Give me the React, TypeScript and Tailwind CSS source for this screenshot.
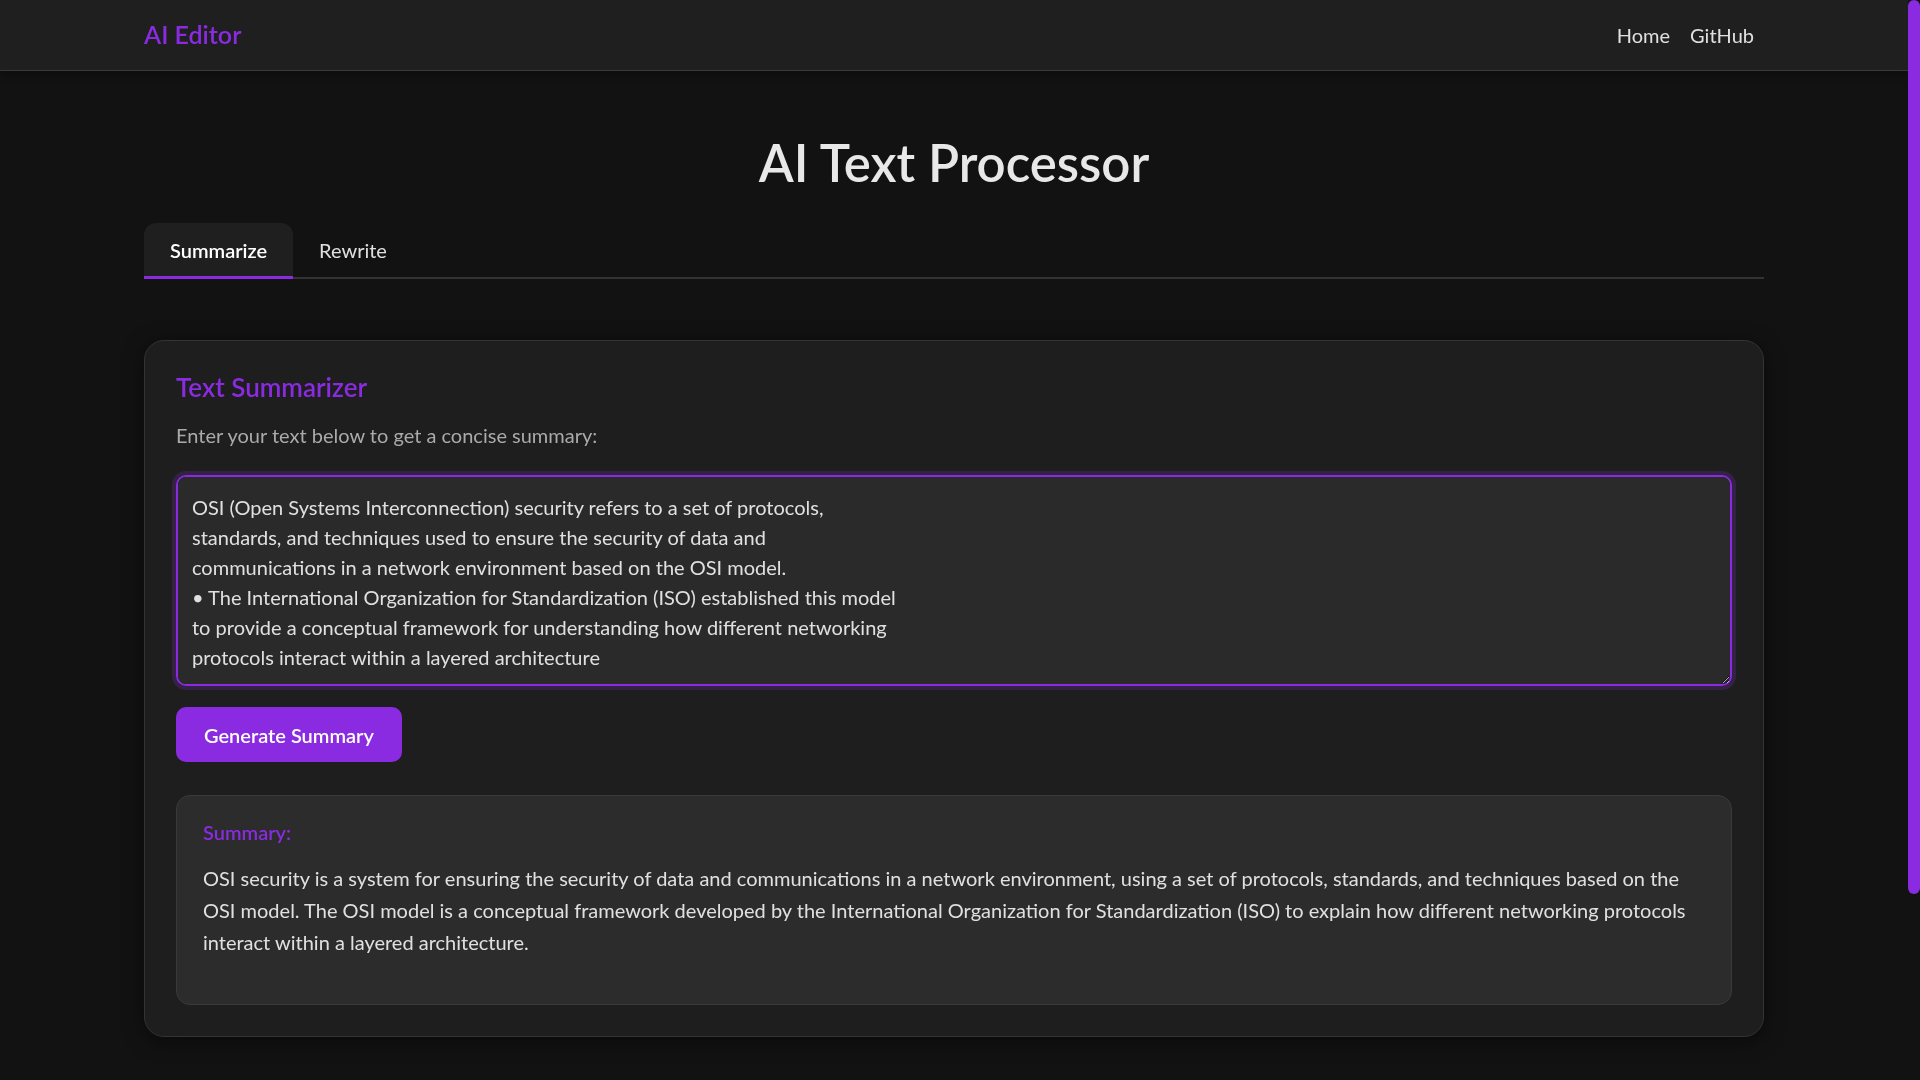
import { useState } from "react"

const initialText = `OSI (Open Systems Interconnection) security refers to a set of protocols,
standards, and techniques used to ensure the security of data and
communications in a network environment based on the OSI model.
• The International Organization for Standardization (ISO) established this model
to provide a conceptual framework for understanding how different networking
protocols interact within a layered architecture`

const summary =
  "OSI security is a system for ensuring the security of data and communications in a network environment, using a set of protocols, standards, and techniques based on the OSI model. The OSI model is a conceptual framework developed by the International Organization for Standardization (ISO) to explain how different networking protocols interact within a layered architecture."

const App = () => {
  const [tab, setTab] = useState("summarize")
  const [text, setText] = useState(initialText)

  return (
    <div className="h-screen flex bg-[#121212] text-[#e0e0e0] font-[Lato,sans-serif] overflow-hidden">
      <div className="flex-1 min-w-0">
        <header className="h-[71px] bg-[#1f1f1f] border-b border-[#3a3a3a] shadow-[0_2px_10px_rgba(0,0,0,0.4)]">
          <div className="w-[1620px] mx-auto h-full flex justify-between items-center">
            <div className="text-[25px] font-semibold text-[#8a2be2]">AI Editor</div>
            <nav className="flex items-center text-[20px] pr-[10px]">
              <a className="px-[10px] text-[#e0e0e0]" href="#">Home</a>
              <a className="pl-[10px] text-[#e0e0e0]" href="#">GitHub</a>
            </nav>
          </div>
        </header>

        <main className="w-[1620px] mx-auto pt-[56px]">
          <h1 className="text-center text-[51px] leading-[72px] font-semibold text-[#e8e8e8]">AI Text Processor</h1>

          <div className="mt-[24px] flex border-b-2 border-[#333]">
            <button
              onClick={() => setTab("summarize")}
              className={`h-[56px] px-[26px] text-[20px] rounded-t-[12px] border-b-[3px] -mb-[2px] ${tab === "summarize" ? "bg-[#1f1f1f] border-[#8a2be2] text-white font-semibold" : "border-transparent text-[#e0e0e0]"}`}
            >
              Summarize
            </button>
            <button
              onClick={() => setTab("rewrite")}
              className={`h-[56px] px-[26px] text-[20px] rounded-t-[12px] border-b-[3px] -mb-[2px] ${tab === "rewrite" ? "bg-[#1f1f1f] border-[#8a2be2] text-white font-semibold" : "border-transparent text-[#e0e0e0]"}`}
            >
              Rewrite
            </button>
          </div>

          <section className="mt-[61px] bg-[#1e1e1e] border border-[#333] rounded-[20px] p-[31px] pb-[31px] shadow-[0_4px_20px_rgba(0,0,0,0.5)]">
            <h2 className="text-[26px] leading-[30px] font-semibold text-[#8a2be2]">Text Summarizer</h2>
            <p className="mt-[18px] text-[20px] leading-[30px] text-[#aaaaaa]">Enter your text below to get a concise summary:</p>

            <textarea
              value={text}
              onChange={(e) => setText(e.target.value)}
              className="mt-[25px] block w-full h-[211px] bg-[#2a2a2a] text-[#e0e0e0] text-[20px] leading-[30px] px-[14px] py-[15px] rounded-[10px] border-2 border-[#8a2be2] shadow-[0_0_0_4px_rgba(138,43,226,0.2)] outline-none"
            />

            <button className="mt-[21px] h-[55px] px-[28px] rounded-[10px] bg-[#8a2be2] text-white text-[20px] font-semibold">
              Generate Summary
            </button>

            <div className="mt-[33px] bg-[#2c2c2c] border border-[#3a3a3a] rounded-[14px] px-[26px] pt-[24px] pb-[46px]">
              <h3 className="text-[20px] leading-[24px] font-semibold text-[#8a2be2]">Summary:</h3>
              <p className="mt-[18px] text-[20px] leading-[32px] text-[#e0e0e0]">{summary}</p>
            </div>
          </section>
        </main>
      </div>

      {/* scrollbar track */}
      <div className="w-[12px] shrink-0 bg-[#121212]">
        <div className="h-[894px] w-full rounded-full bg-[#8a2be2]" />
      </div>
    </div>
  )
}

export default App
